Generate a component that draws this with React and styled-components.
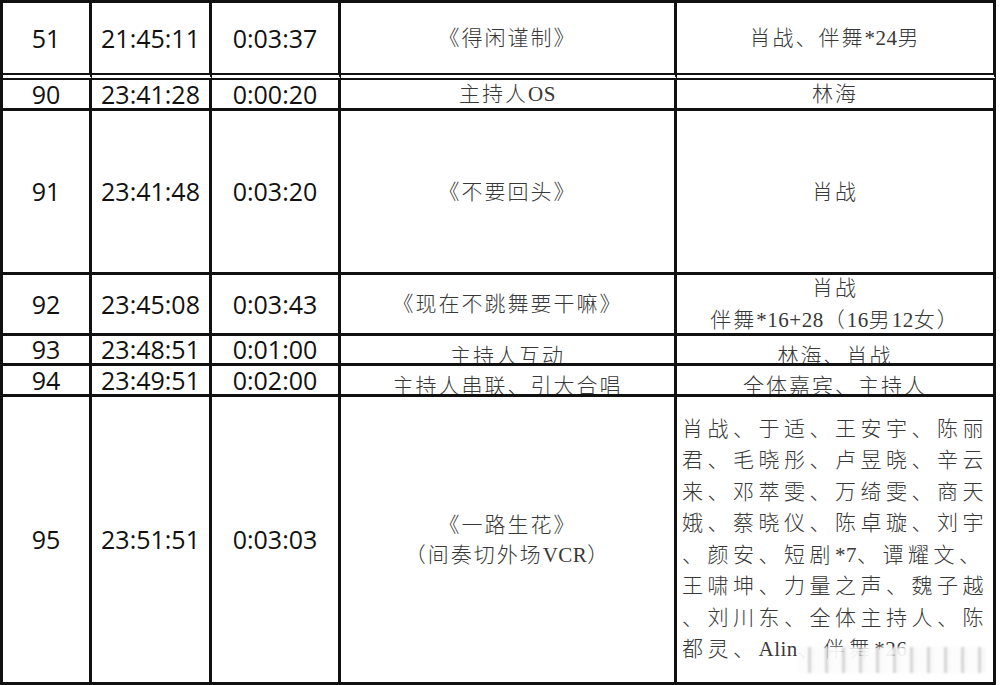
import React from "react";
import styled, { createGlobalStyle } from "styled-components";

const GlobalStyle = createGlobalStyle`
  html, body {
    margin: 0;
    padding: 0;
    background: #ffffff;
  }
`;

const Sheet = styled.div`
  display: grid;
  grid-template-columns: 89px 120px 129px 336px 319px;
  grid-template-rows: 77px 31px 164px 61px 30px 31px 288px;
  width: 996px;
  box-sizing: border-box;
  border-top: 3px solid #111;
  border-left: 3px solid #111;
  background: #fff;
`;

const Cell = styled.div`
  position: relative;
  box-sizing: border-box;
  border-right: 3px solid #111;
  border-bottom: ${p => (p.$double ? "7px double #111" : "3px solid #111")};
  display: flex;
  flex-direction: column;
  align-items: center;
  justify-content: center;
  overflow: hidden;
  padding-top: ${p => p.$shift || 0}px;
`;

const NumCell = styled(Cell)`
  font-family: "Open Sans", "Liberation Sans", sans-serif;
  font-size: 25px;
  color: #111;
  line-height: 1;
`;

const TextCell = styled(Cell)`
  font-family: "Liberation Serif", "Noto Sans CJK SC", serif;
  font-size: 21px;
  font-weight: 300;
  letter-spacing: 2px;
  color: #383838;
  line-height: ${p => p.$lh || 30}px;
  white-space: nowrap;
`;

const ListCell = styled(Cell)`
  align-items: flex-start;
  padding-left: 5px;
  font-family: "Liberation Serif", "Noto Sans CJK SC", serif;
  font-size: 21px;
  font-weight: 300;
  letter-spacing: 4.5px;
  color: #383838;
  line-height: 31.5px;
  white-space: nowrap;
`;

const Line = styled.div``;

// latin runs in the Song-style text are narrow, so they get less spacing
const Latin = styled.span`
  letter-spacing: 0.5px;
`;

const Watermark = styled.div`
  position: absolute;
  left: 121px;
  top: 250px;
  width: 188px;
  height: 26px;
  background:
    repeating-linear-gradient(
      90deg,
      rgba(252, 252, 252, 0.93) 0 10px,
      rgba(195, 195, 195, 0.7) 10px 13px,
      rgba(248, 248, 248, 0.93) 13px 17px
    );
  filter: blur(1px);
`;

const rows = [
  { no: "51", start: "21:45:11", dur: "0:03:37", title: ["《得闲谨制》"], cast: [<>肖战、伴舞<Latin>*24</Latin>男</>], double: true },
  { no: "90", start: "23:41:28", dur: "0:00:20", title: [<>主持人<Latin>OS</Latin></>], cast: ["林海"] },
  { no: "91", start: "23:41:48", dur: "0:03:20", title: ["《不要回头》"], cast: ["肖战"] },
  { no: "92", start: "23:45:08", dur: "0:03:43", title: ["《现在不跳舞要干嘛》"], cast: ["肖战", <>伴舞<Latin>*16+28</Latin>（<Latin>16</Latin>男<Latin>12</Latin>女）</>], lh: 32 },
  { no: "93", start: "23:48:51", dur: "0:01:00", title: ["主持人互动"], cast: ["林海、肖战"], shift: 12 },
  { no: "94", start: "23:49:51", dur: "0:02:00", title: ["主持人串联、引大合唱"], cast: ["全体嘉宾、主持人"], shift: 12 },
];

const finale = [
  "肖战、于适、王安宇、陈丽",
  "君、毛晓彤、卢昱晓、辛云",
  "来、邓萃雯、万绮雯、商天",
  "娥、蔡晓仪、陈卓璇、刘宇",
  <>、颜安、短剧<Latin>*7</Latin>、谭耀文、</>,
  "王啸坤、力量之声、魏子越",
  "、刘川东、全体主持人、陈",
  <>都灵、<Latin>Alin</Latin>、伴舞<Latin>*26</Latin></>,
];

export default function App() {
  return (
    <>
      <GlobalStyle />
      <Sheet>
        {rows.map(r => (
          <React.Fragment key={r.no}>
            <NumCell $double={r.double}>{r.no}</NumCell>
            <NumCell $double={r.double}>{r.start}</NumCell>
            <NumCell $double={r.double}>{r.dur}</NumCell>
            <TextCell $double={r.double} $shift={r.shift} $lh={r.lh}>
              {r.title.map((t, i) => <Line key={i}>{t}</Line>)}
            </TextCell>
            <TextCell $double={r.double} $shift={r.shift} $lh={r.lh}>
              {r.cast.map((t, i) => <Line key={i}>{t}</Line>)}
            </TextCell>
          </React.Fragment>
        ))}
        <NumCell>95</NumCell>
        <NumCell>23:51:51</NumCell>
        <NumCell>0:03:03</NumCell>
        <TextCell>
          <Line>《一路生花》</Line>
          <Line>（间奏切外场<Latin>VCR</Latin>）</Line>
        </TextCell>
        <ListCell>
          {finale.map((t, i) => <Line key={i}>{t}</Line>)}
          <Watermark />
        </ListCell>
      </Sheet>
    </>
  );
}
